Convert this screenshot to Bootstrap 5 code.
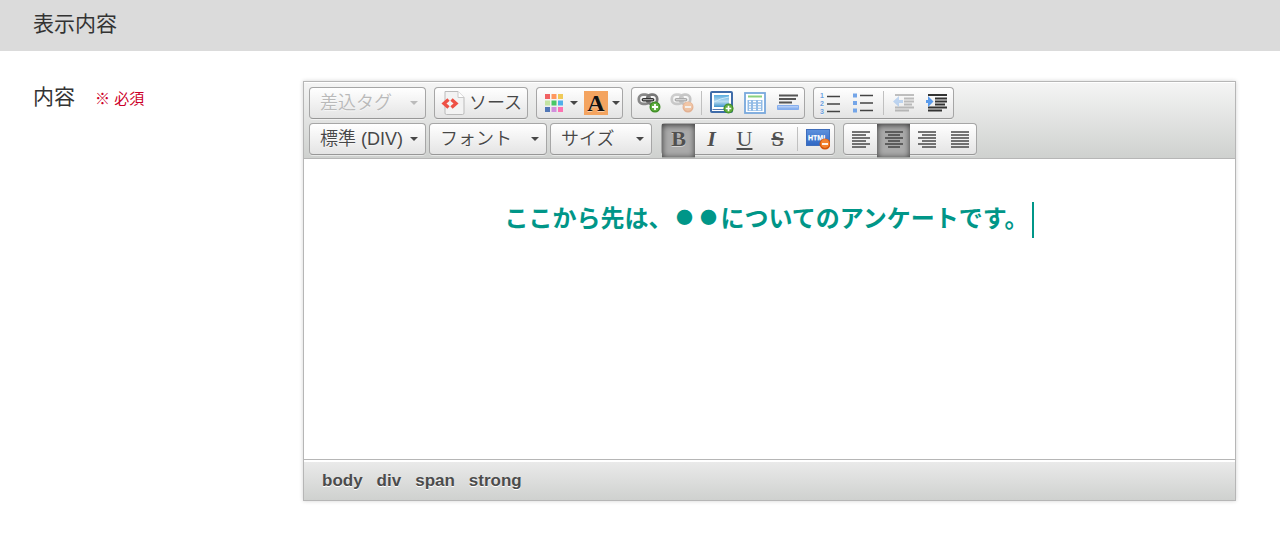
<!DOCTYPE html>
<html lang="ja">
<head>
<meta charset="utf-8">
<meta name="viewport" content="width=device-width, initial-scale=1">
<title>表示内容</title>
<link href="https://cdn.jsdelivr.net/npm/bootstrap@5.3.0/dist/css/bootstrap.min.css" rel="stylesheet">
<style>
body{font-family:"Liberation Sans","Noto Sans CJK JP",sans-serif;color:#333;background:#fff}
.section-head{background:#dbdbdb;padding:8px 33px 11px;font-size:21px;line-height:32px;font-weight:400}
.form-line{padding:30px 44px 42px 33px}
.field-name{width:270px;line-height:32px;gap:20px}
.field-name label{font-size:21px}
.need{font-size:15px;color:#cc0029}
.editor{border:1px solid #b6b6b6;box-shadow:0 0 4px rgba(0,0,0,.18);min-width:0}
.tools{background:linear-gradient(#f5f5f5,#cfd1cf);box-shadow:0 1px 0 #fff inset;border-bottom:1px solid #b6b6b6;padding:5px 5px 3px;row-gap:4px}
.tool-line{column-gap:8px;row-gap:4px}
.combos{gap:3px;margin-right:1px}
.group{display:flex;height:32px;border:1px solid #a6a6a6;border-bottom-color:#979797;border-radius:4px;background:linear-gradient(#fff,#e4e4e4);box-shadow:0 1px 0 rgba(255,255,255,.5)}
.tool{border:0;background:none;padding:0;width:33px;height:30px;display:flex;align-items:center;justify-content:center;color:#474747;text-shadow:0 1px 0 rgba(255,255,255,.5)}
.tool svg{width:24px;height:24px;display:block;flex:none}
.combo,.source-btn{font-size:18px;line-height:30px;font-weight:350;white-space:nowrap}
.combo{justify-content:space-between;padding:0 7px 0 10px}
.w-a{width:115px}.w-b{width:116px}.w-c{width:100px}
.combo:disabled{color:#b9b9b9}
.source-btn{width:92px;gap:3px}
.source-btn svg{width:26px}
.tri{width:0;height:0;border:4px solid transparent;border-top-color:#474747;border-bottom:0;flex:none}
.combo:disabled .tri{border-top-color:#bbb}
.pick{gap:4px}
.pick-a{width:45px}.pick-b{width:40px}
.rule{width:1px;height:24px;margin:3px;background:#c0c0c0}
.pressed{height:33px;background:#aaa;box-shadow:0 1px 6px rgba(0,0,0,.7) inset,0 1px 0 rgba(0,0,0,.2);padding-bottom:3px}
.letter{font-family:"Liberation Serif",serif;font-size:22px;line-height:24px;color:#505050}
.letter u{text-underline-offset:2px;text-decoration-thickness:2px}
.letter s{font-weight:700;text-decoration-thickness:2px}
.writing{height:300px;padding:40px 20px;font-family:"Noto Sans CJK JP",sans-serif;font-size:24px;line-height:36px;font-weight:700;color:#009688;outline:0}
.bullet-mark{display:inline-block;width:24px;font-size:17px;line-height:20px;vertical-align:3px}
.caret-bar{display:inline-block;width:2px;height:36px;background:#009688;vertical-align:middle;margin-left:4px}
.path-bar{height:41px;border-top:1px solid #b6b6b6;background:linear-gradient(#ebebeb,#cfd1cf);box-shadow:0 2px 0 #fff inset;padding:1px 18px 0;gap:14px}
.path-bar a{font-size:17px;line-height:20px;font-weight:700;color:#4c4c4c;text-decoration:none;text-shadow:0 1px 0 #fff}
</style>
</head>
<body>
<svg width="0" height="0" class="position-absolute" aria-hidden="true">
<defs>
<linearGradient id="blue" x2="0" y2="1"><stop stop-color="#5e91dd"/><stop offset="1" stop-color="#2f67c4"/></linearGradient>
<linearGradient id="sky" x2="0" y2="1"><stop stop-color="#5caee0"/><stop offset=".55" stop-color="#b9dcf1"/><stop offset="1" stop-color="#3e92ca"/></linearGradient>
<linearGradient id="sand" x2="0" y2="1"><stop stop-color="#c7dafb"/><stop offset="1" stop-color="#74a4eb"/></linearGradient>
<symbol id="chain" viewBox="0 0 24 24"><g fill="none" stroke-linecap="round"><rect x="2" y="4" width="12" height="10" rx="4.500" stroke="#888" stroke-width="3"/><rect x="11" y="4" width="11" height="10" rx="4.500" stroke="#777" stroke-width="3"/><path d="M7 9.500h10" stroke="#333" stroke-width="4"/><path d="M7 9.500h10" stroke="#ccc" stroke-width="1"/></g></symbol>
<symbol id="plus" viewBox="0 0 12 12"><circle cx="6" cy="6" r="5.500" fill="#3e8d25"/><circle cx="6" cy="6" r="4.300" fill="#60ad40"/><path d="M6 3v6M3 6h6" stroke="#fff" stroke-width="1.800"/></symbol>
<symbol id="minus" viewBox="0 0 12 12"><circle cx="6" cy="6" r="5.500" fill="#d75508"/><circle cx="6" cy="5.500" r="4.400" fill="#f38330"/><path d="M3 6h6" stroke="#fff" stroke-width="1.800"/></symbol>
</defs>
</svg>

<h1 class="section-head m-0">表示内容</h1>
<main class="form-line d-flex align-items-start">
  <div class="field-name d-flex flex-shrink-0 align-items-baseline"><label id="body-label">内容</label><span class="need">※ 必須</span></div>
  <section class="editor flex-grow-1">
    <div class="tools d-flex flex-column" role="toolbar" aria-label="書式">
      <div class="tool-line d-flex flex-wrap">
        <div class="group"><button class="tool combo w-a" disabled>差込タグ<span class="tri"></span></button></div>
        <div class="group"><button class="tool source-btn"><svg viewBox="0 0 26 24"><path d="M5 .5h13l6 6V22q0 1.500-1.500 1.500h-16Q5 23.500 5 22z" fill="#f3f3f3" stroke="#bbb"/><path d="M18 .5v6h6" fill="#fff" stroke="#c8c8c8"/><path d="M8.500 8.500 4 12.500l4.500 4M11.500 8.500l4.500 4-4.500 4" fill="none" stroke="#ee5145" stroke-width="3.400"/></svg>ソース</button></div>
        <div class="group">
          <button class="tool pick pick-a" aria-label="文字色"><svg viewBox="0 0 24 24"><path fill="#f16263" d="M3 3h5v5H3z"/><path fill="#ff985f" d="M9.500 3h5v5h-5z"/><path fill="#efca59" d="M16 3h5v5h-5z"/><path fill="#c5e4a3" d="M3 9.500h5v5H3z"/><path fill="#48c865" d="M9.500 9.500h5v5h-5z"/><path fill="#50afea" d="M16 9.500h5v5h-5z"/><path fill="#5277b7" d="M3 16h5v5H3z"/><path fill="#d18fdc" d="M9.500 16h5v5h-5z"/><path fill="#fd72b1" d="M16 16h5v5h-5z"/></svg><span class="tri"></span></button>
          <button class="tool pick pick-b" aria-label="背景色"><svg viewBox="0 0 24 24"><path fill="#f4a460" d="M0 0h24v24H0z"/><text x="12" y="19.500" text-anchor="middle" font-family="Liberation Serif,serif" font-weight="700" font-size="24" fill="#111">A</text></svg><span class="tri"></span></button>
        </div>
        <div class="group">
          <button class="tool" aria-label="リンク"><svg viewBox="0 0 24 24"><use href="#chain" width="22" height="22"/><use href="#plus" x="12" y="10" width="12" height="12"/></svg></button>
          <button class="tool" aria-label="リンク解除" disabled><svg viewBox="0 0 24 24" opacity=".38"><use href="#chain" width="22" height="22"/><use href="#minus" x="12" y="10" width="12" height="12"/></svg></button>
          <span class="rule"></span>
          <button class="tool" aria-label="画像"><svg viewBox="0 0 24 24"><rect x="1" y="1" width="21" height="20" rx="1" fill="#fff" stroke="#3f6ca9" stroke-width="2"/><path fill="url(#sky)" d="M4 4h15v12H4z"/><path d="M4 11q7-4 15-5" stroke="#cceafa" fill="none"/><path d="M2.500 18.500h19" stroke="#547bb3"/><use href="#plus" x="13" y="12" width="11" height="11"/></svg></button>
          <button class="tool" aria-label="表"><svg viewBox="0 0 24 24"><rect x="2" y="2" width="20" height="20" fill="#fff" stroke="#78a8dc" stroke-width="1.800"/><path d="M5 5.500h14" stroke="#8bd17d" stroke-width="2"/><path fill="#93bce6" d="M4.500 9h15v11h-15z"/><path d="M6 10.500h2M10 10.500h3M15 10.500h3M6 13.500h2M10 13.500h3M15 13.500h3M6 16h2M10 16h3M15 16h3M6 18.500h2M10 18.500h3M15 18.500h3" stroke="#fff" stroke-width="1.500"/></svg></button>
          <button class="tool" aria-label="横罫線"><svg viewBox="0 0 24 24"><path d="M3 4.500h19M3 8h17M3 11.500h13" stroke="#555" stroke-width="1.800"/><path fill="url(#sand)" stroke="#86aeed" d="M1.500 14.500h21v4h-21z"/></svg></button>
        </div>
        <div class="group">
          <button class="tool" aria-label="番号付きリスト"><svg viewBox="0 0 24 24"><g font-family="Liberation Sans,sans-serif" font-size="7" font-weight="700" fill="#6a9fe0"><text x="1" y="7">1</text><text x="1" y="15">2</text><text x="1" y="23">3</text></g><path d="M8 5.500h13M8 13h13M8 20.500h13" stroke="#444" stroke-width="1.700"/></svg></button>
          <button class="tool" aria-label="箇条書き"><svg viewBox="0 0 24 24"><path fill="#74a5e8" d="M1 2.500h4v4H1zM1 10h4v4H1zM1 17.500h4v4H1z"/><path d="M8 4.500h13M8 12h13M8 19.500h13" stroke="#444" stroke-width="1.700"/></svg></button>
          <span class="rule"></span>
          <button class="tool" aria-label="インデント解除" disabled><svg viewBox="0 0 24 24" opacity=".35"><path d="M3 4h19M12 7.500h10M12 10.500h10M12 13.500h8M3 16.500h19M3 19.500h14" stroke="#555" stroke-width="1.800"/><path fill="#5a9bec" d="M1 10.500 7 5v4h4v3H7v4z"/></svg></button>
          <button class="tool" aria-label="インデント"><svg viewBox="0 0 24 24"><path d="M3 4h19M10 7.500h12M10 10.500h12M10 13.500h10M3 16.500h19M3 19.500h14" stroke="#333" stroke-width="1.800"/><path fill="#5a9bec" d="M8.500 10.500 3 5v4H1v3h2v4z"/></svg></button>
        </div>
      </div>
      <div class="tool-line d-flex flex-wrap">
        <div class="combos d-flex">
          <div class="group"><button class="tool combo w-a">標準 (DIV)<span class="tri"></span></button></div>
          <div class="group"><button class="tool combo w-b">フォント<span class="tri"></span></button></div>
          <div class="group"><button class="tool combo w-c">サイズ<span class="tri"></span></button></div>
        </div>
        <div class="group">
          <button class="tool letter pressed" aria-pressed="true"><b>B</b></button>
          <button class="tool letter"><b><i>I</i></b></button>
          <button class="tool letter"><u>U</u></button>
          <button class="tool letter"><s>S</s></button>
          <span class="rule"></span>
          <button class="tool" aria-label="書式を解除"><svg viewBox="0 0 24 24"><rect x=".5" y="2.500" width="23" height="16" fill="url(#blue)" stroke="#3f6ebc"/><text x="2" y="12.500" font-family="Liberation Sans,sans-serif" font-weight="700" font-size="7" fill="#fff">HTML</text><use href="#minus" x="13" y="11" width="12" height="12"/></svg></button>
        </div>
        <div class="group">
          <button class="tool" aria-label="左揃え"><svg viewBox="0 0 24 24"><path d="M3 5h18M3 8h14M3 11h18M3 14h14M3 17h18M3 20h14" stroke="#484848" stroke-width="1.600"/></svg></button>
          <button class="tool pressed" aria-label="中央揃え" aria-pressed="true"><svg viewBox="0 0 24 24"><path d="M3 5h18M6 8h12M3 11h18M6 14h12M3 17h18M6 20h12" stroke="#444" stroke-width="1.600"/></svg></button>
          <button class="tool" aria-label="右揃え"><svg viewBox="0 0 24 24"><path d="M3 5h18M7 8h14M3 11h18M7 14h14M3 17h18M7 20h14" stroke="#484848" stroke-width="1.600"/></svg></button>
          <button class="tool" aria-label="両端揃え"><svg viewBox="0 0 24 24"><path d="M3 5h18M3 8h18M3 11h18M3 14h18M3 17h18M3 20h18" stroke="#484848" stroke-width="1.600"/></svg></button>
        </div>
      </div>
    </div>
    <div class="writing text-center" role="textbox" aria-multiline="true" aria-labelledby="body-label" contenteditable="true" spellcheck="false">ここから先は、<span class="bullet-mark">●</span><span class="bullet-mark">●</span>についてのアンケートです。<span class="caret-bar"></span></div>
    <nav class="path-bar d-flex align-items-center" aria-label="要素パス"><a href="#">body</a><a href="#">div</a><a href="#">span</a><a href="#">strong</a></nav>
  </section>
</main>
<script src="https://cdn.jsdelivr.net/npm/bootstrap@5.3.0/dist/js/bootstrap.bundle.min.js"></script>
</body>
</html>
